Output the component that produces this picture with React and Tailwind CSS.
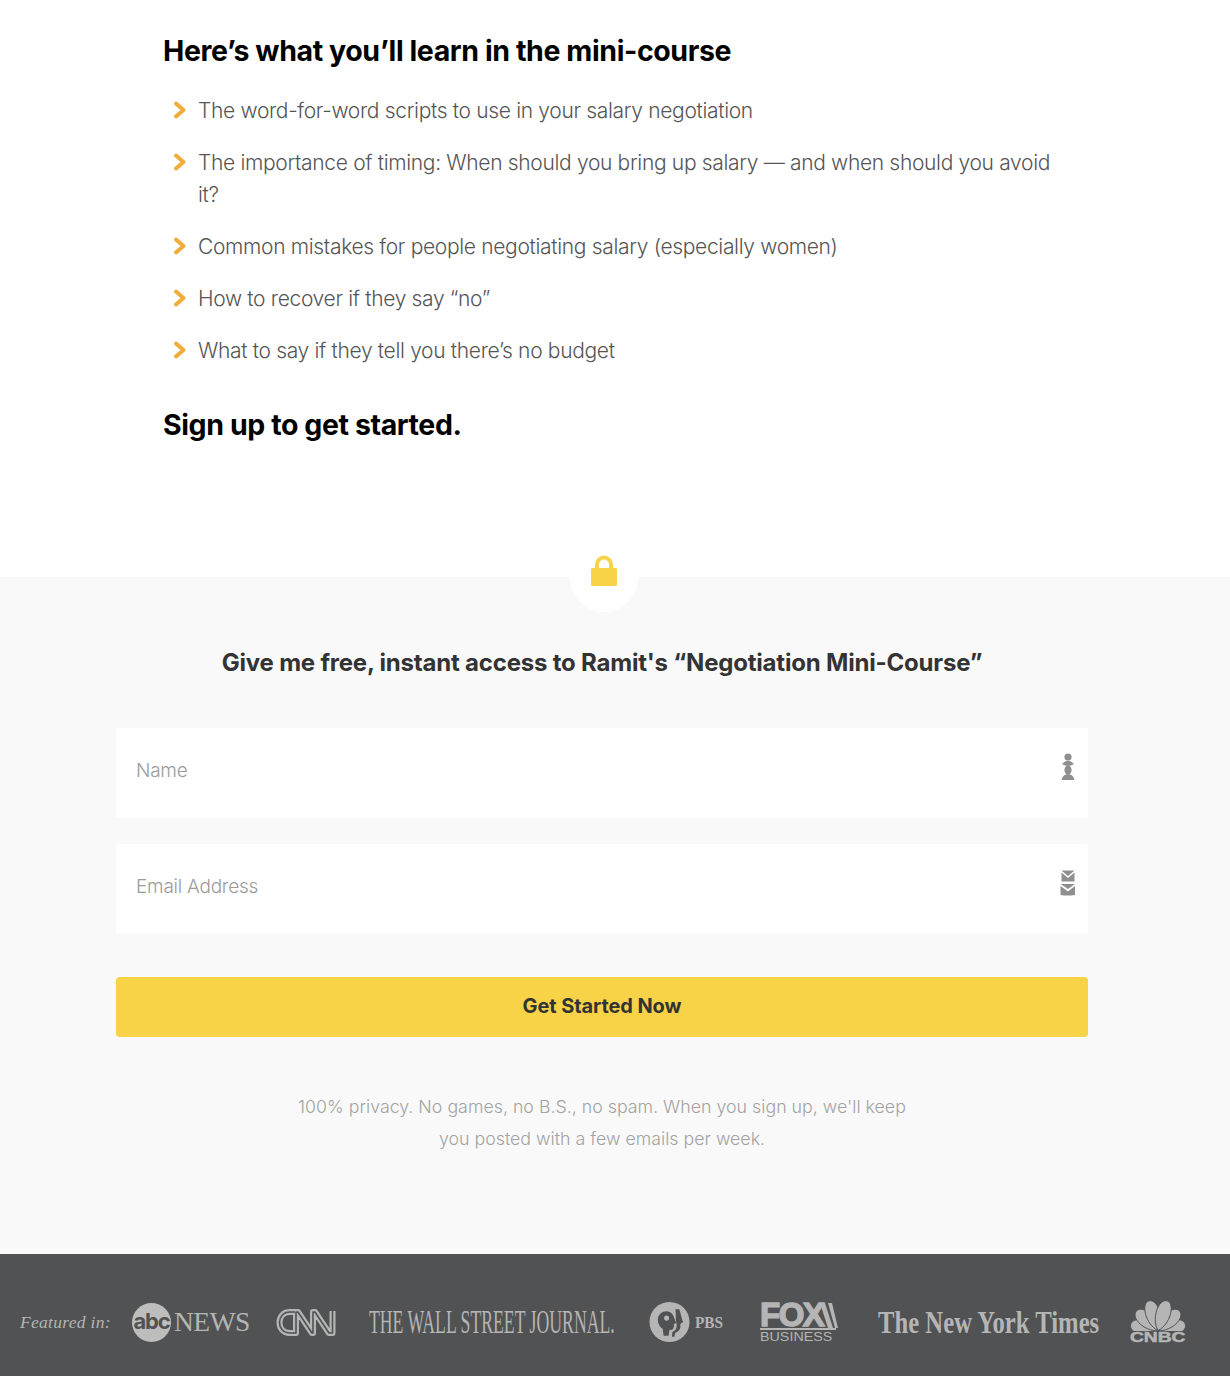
const bullets = [
  'The word-for-word scripts to use in your salary negotiation',
  'The importance of timing: When should you bring up salary — and when should you avoid it?',
  'Common mistakes for people negotiating salary (especially women)',
  'How to recover if they say “no”',
  'What to say if they tell you there’s no budget',
];

const feathers = [
  { angle: -78, len: 28 },
  { angle: 78, len: 28 },
  { angle: -48, len: 29 },
  { angle: 48, len: 29 },
  { angle: -17, len: 31 },
  { angle: 17, len: 31 },
];

function Chevron() {
  return (
    <svg width="14" height="18" viewBox="0 0 14 18" className="absolute left-[-25px] top-[6px]">
      <path d="M3 2.5 L10.5 9 L3 15.5" fill="none" stroke="#f0ad3c" strokeWidth="4" strokeLinecap="round" strokeLinejoin="round" />
    </svg>
  );
}

function LockIcon() {
  return (
    <svg width="28" height="32" viewBox="0 0 28 32">
      <path d="M7 15 V9.5 a7 7 0 0 1 14 0 V15" fill="none" stroke="#f8d347" strokeWidth="4" />
      <rect x="1" y="13" width="26" height="18" rx="1.5" fill="#f8d347" />
    </svg>
  );
}

function UserIcon() {
  return (
    <svg width="16" height="28" viewBox="0 0 16 28" fill="#8f8f8f">
      <circle cx="8" cy="4" r="3.6" />
      <path d="M2 11 Q5 7.5 8 7.5 Q11 7.5 14 11 Q11 13 8 13 Q5 13 2 11Z" />
      <ellipse cx="8" cy="17" rx="3.6" ry="4.6" />
      <path d="M1.5 27 Q3 21 8 21 Q13 21 14.5 27Z" />
    </svg>
  );
}

function MailIcon() {
  return (
    <svg width="16" height="26" viewBox="0 0 16 26" fill="#8f8f8f">
      <path d="M1.5 0.5 H14.5 L8 6Z" />
      <path d="M1.5 2.5 L8 8 L14.5 2.5 V11.5 H1.5Z" />
      <path d="M0.5 14 H15 L8 19Z" />
      <path d="M0.5 16 L8 21.5 L15 16 V25 Q8 26 0.5 25Z" />
    </svg>
  );
}

function FormField({ placeholder, icon }) {
  return (
    <div className="h-[90px] bg-white rounded-[3px] flex items-center justify-between pl-[20px] pr-[12px]">
      <span className="mb-[4px] text-[19px] font-light text-[#9b9b9b] tracking-[-0.25px]">{placeholder}</span>
      <span className="mb-[12px] flex">{icon}</span>
    </div>
  );
}

function AbcNews() {
  return (
    <div className="ml-[22px] w-[118px] shrink-0 flex items-center gap-[3px] text-[#b5b5b5]">
      <span className="w-[39px] h-[39px] shrink-0 rounded-full bg-[#bdbdbd] flex items-center justify-center text-[#505253] text-[22px] font-bold tracking-[-1.2px] leading-none pb-[3px]">abc</span>
      <span className="font-['Liberation_Serif',serif] text-[27.5px] leading-none tracking-[-0.5px]">NEWS</span>
    </div>
  );
}

function CnnLogo() {
  const d = 'M19 5 H14 C7 5 3.5 10 3.5 15.5 C3.5 21 7 26 14 26 H20 V5 H22 L36 26 H37 V5 H39 L53 26 H56.5 V4';
  return (
    <svg width="60" height="30" viewBox="0 0 60 30" className="ml-[26px] shrink-0">
      <path d={d} fill="none" stroke="#b5b5b5" strokeWidth="6" strokeLinejoin="round" />
      <path d={d} fill="none" stroke="#505253" strokeWidth="1.6" strokeLinejoin="round" />
    </svg>
  );
}

function PbsLogo() {
  return (
    <div className="ml-[34px] w-[75px] shrink-0 flex items-center gap-[5px]">
      <svg width="41" height="42" viewBox="0 0 42 42" className="shrink-0">
        <circle cx="21" cy="21" r="20.5" fill="#b5b5b5" />
        <path d="M9 19 C9 10 20 7 24 13 C26 16 26 18 28 22 L25.5 23 C26 26 25 30 21 29 L20 35 H15 L14 28 C11 26 9 23 9 19Z" fill="#505253" />
        <circle cx="18" cy="17" r="2.6" fill="#b5b5b5" />
        <path d="M27 8 L31 8 C33 14 33 16 35 21 L32 23 C33 27 31 31 27 32 L26 36 L23.5 36 L24 31 C28 30 29 26 28 22 C27 17 28 13 27 8Z" fill="#505253" />
      </svg>
      <span className="font-['Liberation_Serif',serif] font-bold text-[17px] leading-none scale-x-[0.9] origin-left w-[29px]">PBS</span>
    </div>
  );
}

function FoxLogo() {
  return (
    <div className="ml-[36px] w-[76px] shrink-0 flex flex-col items-stretch">
      <div className="flex items-center h-[26px]">
        <span className="font-['Liberation_Sans',sans-serif] font-bold text-[33px] leading-[26px] tracking-[-1.5px] [-webkit-text-stroke:1.4px_#b5b5b5]">FOX</span>
        <svg width="18" height="25" viewBox="0 0 18 25" className="ml-[-3px] shrink-0">
          <path d="M0 0 H5 L13 25 H8Z M8 0 H12 L18 25 H15Z" fill="#b5b5b5" />
        </svg>
      </div>
      <div className="h-[2px] bg-[#b5b5b5]" />
      <span className="font-['Liberation_Sans',sans-serif] text-[13px] leading-[11px] mt-[1px] whitespace-nowrap scale-x-[1.1] origin-left">BUSINESS</span>
    </div>
  );
}

function CnbcLogo() {
  return (
    <div className="ml-[28px] w-[59px] shrink-0 flex flex-col items-center mt-[-3px]">
      <svg width="56" height="32" viewBox="0 0 56 32" fill="#b5b5b5">
        {feathers.map(({ angle, len }) => (
          <path
            key={angle}
            d={`M0 0 C-10 -9 -9 -${len} 0 -${len} C9 -${len} 10 -9 0 0Z`}
            transform={`translate(28 31.5) rotate(${angle})`}
            stroke="#505253"
            strokeWidth="0.9"
          />
        ))}
      </svg>
      <span className="font-['Liberation_Sans',sans-serif] font-bold text-[15px] leading-[12px] scale-x-[1.28] [-webkit-text-stroke:0.5px_#b5b5b5]">CNBC</span>
    </div>
  );
}

export default function App() {
  return (
    <div className="w-[1230px] h-[1376px] bg-white font-['Inter','Open_Sans',sans-serif] flex flex-col overflow-hidden">
      <section className="h-[577px] shrink-0 pl-[163px] pr-[165px] pt-[33px]">
        <h2 className="text-[28.5px] leading-[36px] font-bold text-black tracking-[-0.4px]">Here’s what you’ll learn in the mini-course</h2>
        <ul className="mt-[26px] ml-[35px] flex flex-col gap-[20px]">
          {bullets.map((text) => (
            <li key={text} className="relative text-[21px] leading-[32px] font-light text-[#555] tracking-[-0.33px]">
              <Chevron />
              {text}
            </li>
          ))}
        </ul>
        <h2 className="mt-[40px] text-[28.5px] leading-[36px] font-bold text-black tracking-[-0.4px]">Sign up to get started.</h2>
      </section>

      <section className="relative flex-1 bg-[#f9f9f9] pl-[116px] pr-[142px] pt-[71px]">
        <div className="absolute left-[570px] top-[-33px] w-[68px] h-[68px] rounded-full bg-white flex justify-center pt-[11px]">
          <LockIcon />
        </div>
        <h3 className="text-center text-[24px] leading-[30px] font-bold text-[#333] tracking-[-0.2px]">
          Give me free, instant access to Ramit's “Negotiation Mini-Course”
        </h3>
        <div className="mt-[50px] flex flex-col gap-[26px]">
          <FormField placeholder="Name" icon={<UserIcon />} />
          <FormField placeholder="Email Address" icon={<MailIcon />} />
        </div>
        <button className="mt-[43px] w-full h-[60px] bg-[#f8d347] rounded-[4px] pb-[2px] text-[20px] font-bold text-[#333] tracking-[-0.1px]">
          Get Started Now
        </button>
        <p className="mt-[54px] mx-auto w-[630px] text-center text-[17.8px] leading-[32px] font-light text-[#a3a3a3]">
          100% privacy. No games, no B.S., no spam. When you sign up, we'll keep you posted with a few emails per week.
        </p>
      </section>

      <footer className="h-[122px] shrink-0 bg-[#505253] text-[#b5b5b5] flex items-center pl-[20px] pt-[14px]">
        <span className="w-[90px] shrink-0 font-['Liberation_Serif',serif] italic text-[17.5px] tracking-[0.3px] whitespace-nowrap">Featured in:</span>
        <AbcNews />
        <CnnLogo />
        <span className="ml-[33px] w-[246px] shrink-0 font-['Liberation_Serif',serif] text-[33px] leading-none whitespace-nowrap scale-x-[0.537] origin-left">THE WALL STREET JOURNAL.</span>
        <PbsLogo />
        <FoxLogo />
        <span className="ml-[42px] w-[222px] shrink-0 font-['Liberation_Serif',serif] font-bold text-[31px] leading-none whitespace-nowrap scale-x-[0.797] origin-left">The New York Times</span>
        <CnbcLogo />
      </footer>
    </div>
  );
}
